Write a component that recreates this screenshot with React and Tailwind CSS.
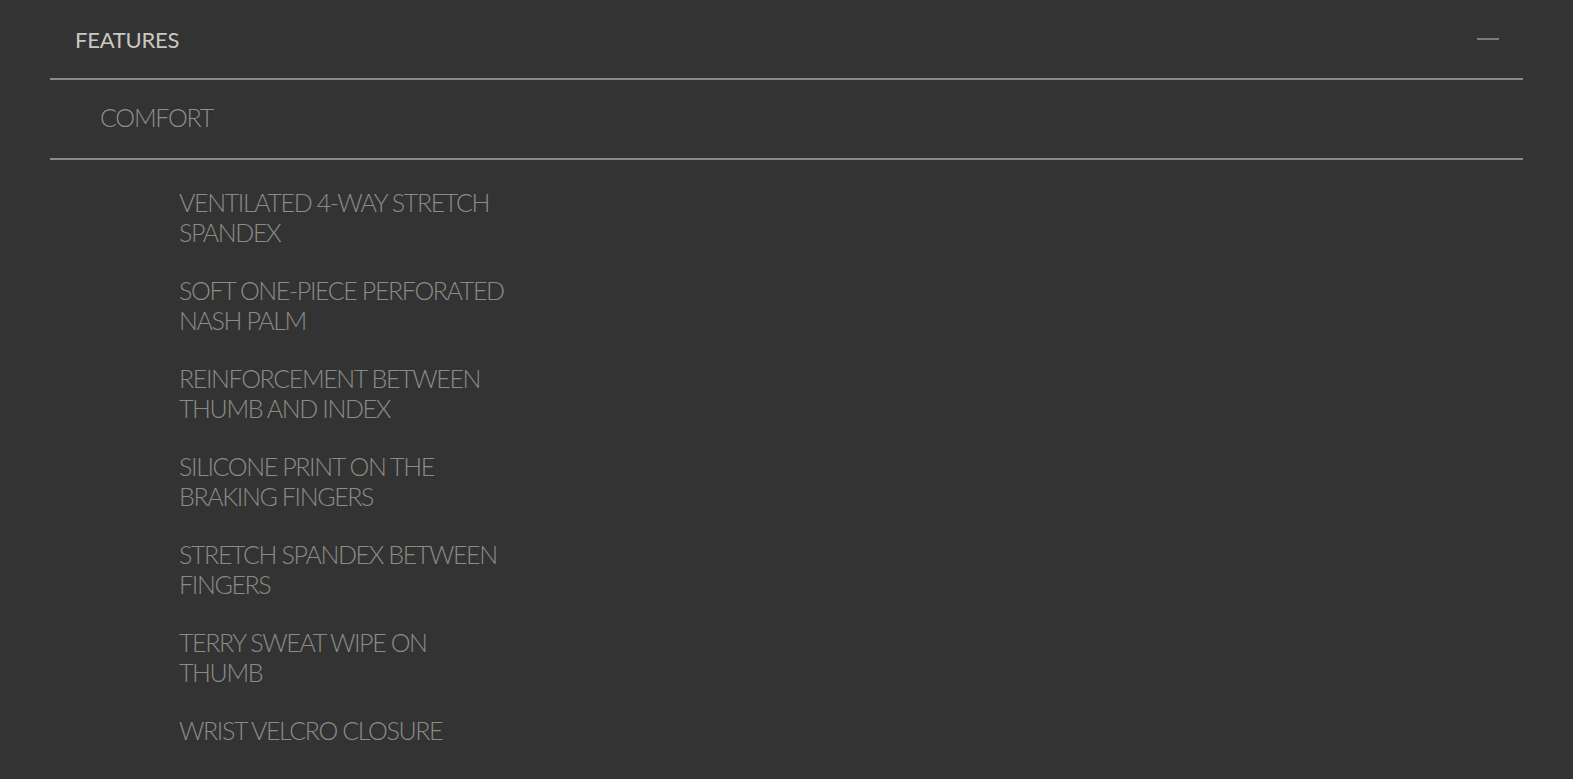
import { Minus } from "lucide-react";

const features = [
  "Ventilated 4-way stretch spandex",
  "Soft one-piece perforated nash palm",
  "Reinforcement between thumb and index",
  "Silicone print on the braking fingers",
  "Stretch spandex between fingers",
  "Terry sweat wipe on thumb",
  "Wrist velcro closure",
];

export default function App() {
  return (
    <div className="min-h-screen bg-[#333333] font-['Lato',sans-serif] uppercase">
      <div className="mx-[50px]">
        {/* section header */}
        <div className="flex h-[80px] items-center justify-between border-b-2 border-[#8a8a84] pl-[25px] pr-[24px]">
          <h2 className="text-[22px] font-normal tracking-[-0.01em] text-[#c9c9c3]">
            Features
          </h2>
          <div className="h-[2px] w-[22px] bg-[#7a7a78]" />
        </div>

        {/* group */}
        <div className="flex h-[80px] items-center border-b-2 border-[#8a8a84] pb-[2px] pl-[50px]">
          <h3 className="text-[25px] font-light tracking-[-0.05em] text-[#8f8f8a]">Comfort</h3>
        </div>

        <ul className="flex flex-col gap-[28px] pl-[129px] pt-[27px]">
          {features.map((item) => (
            <li
              key={item}
              className="w-[330px] text-[25px] font-light leading-[30px] tracking-[-0.055em] text-[#8c8c86]"
            >
              {item}
            </li>
          ))}
        </ul>
      </div>
    </div>
  );
}
